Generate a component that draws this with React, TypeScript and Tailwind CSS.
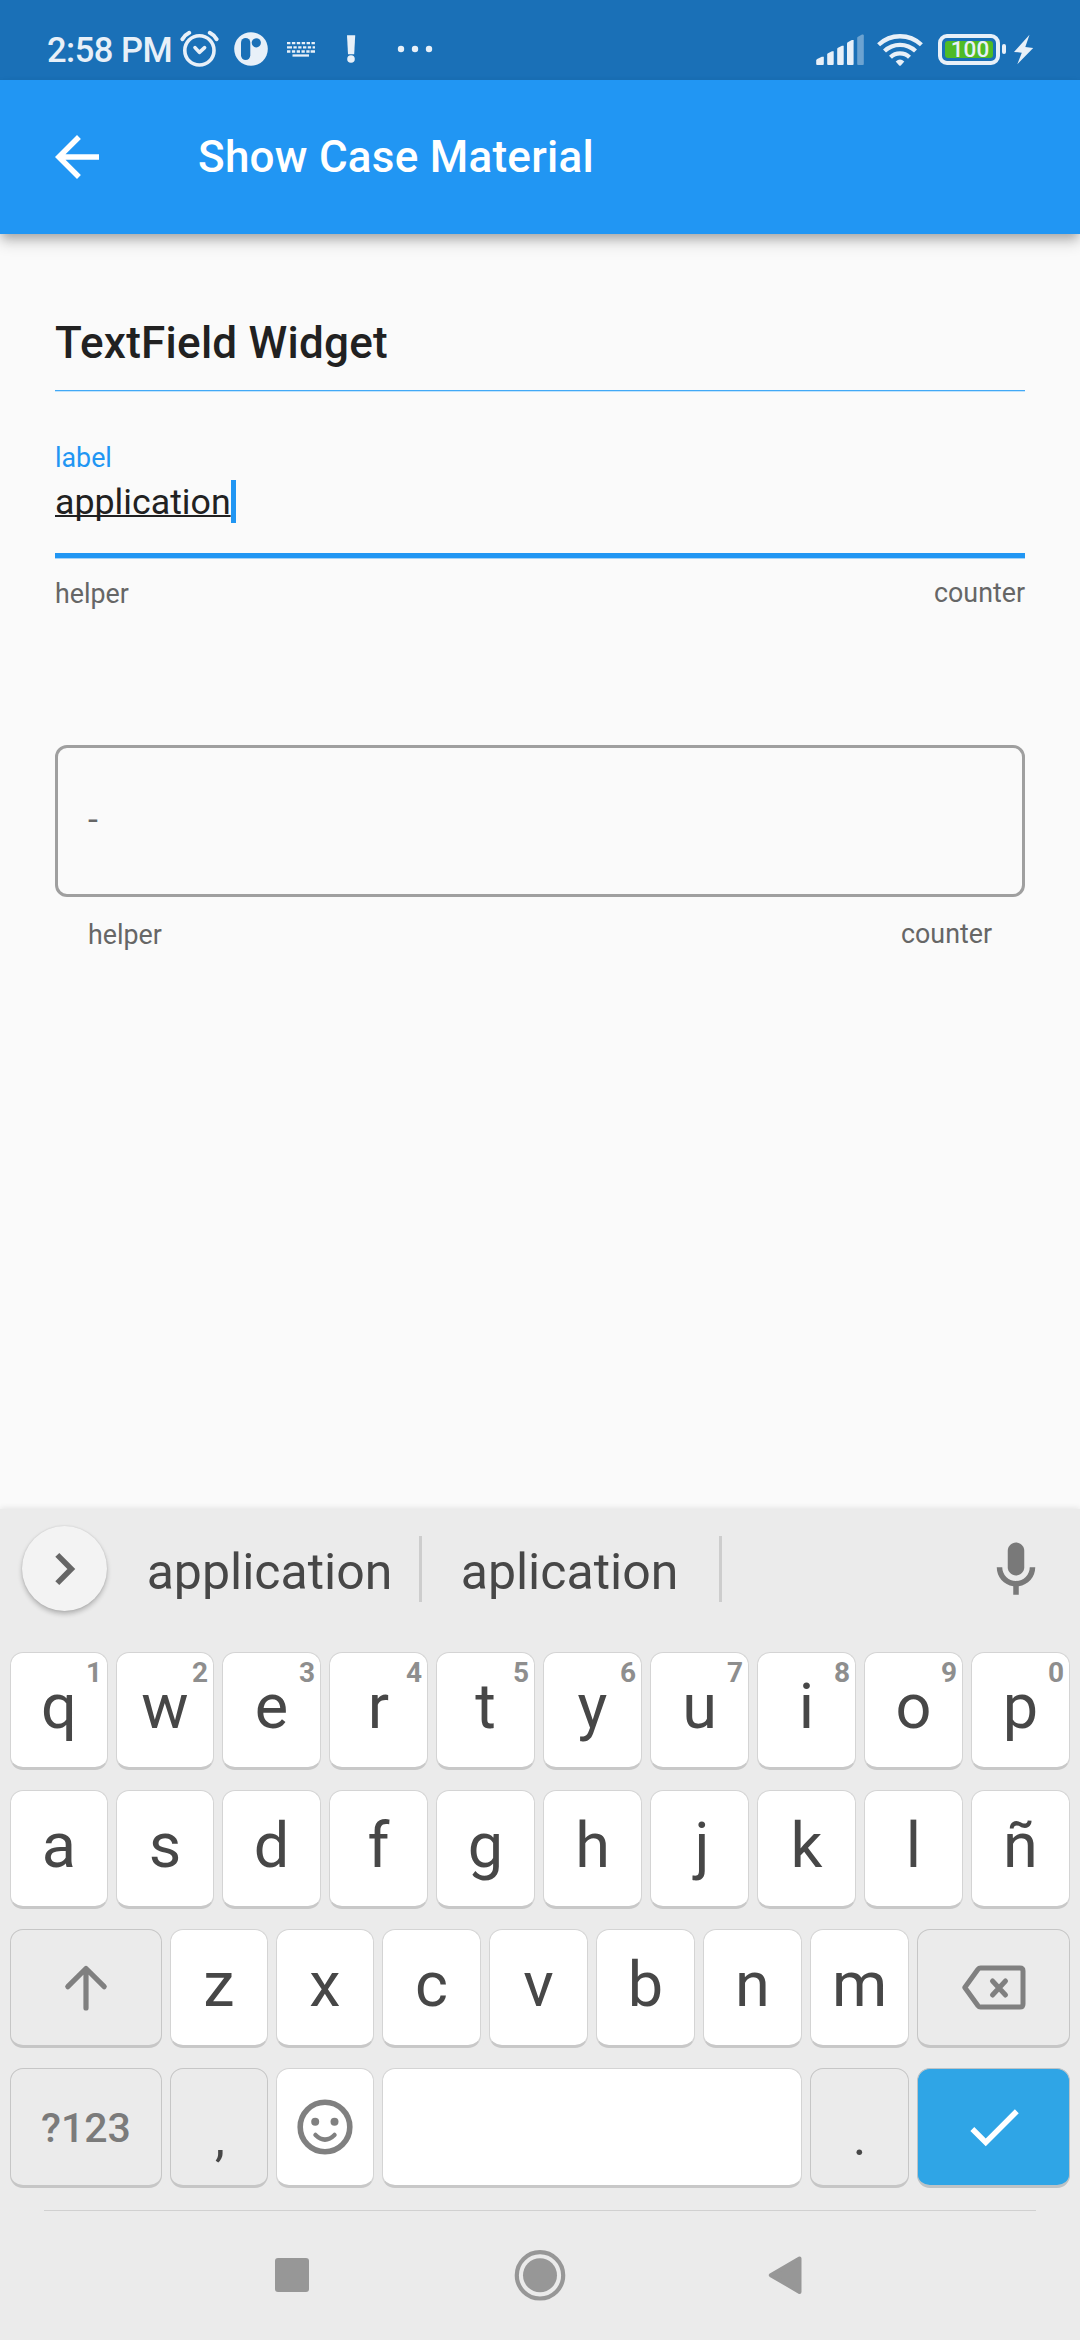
import type { ReactNode } from "react";

const ROW_ONE = [
  ["q", "1"],
  ["w", "2"],
  ["e", "3"],
  ["r", "4"],
  ["t", "5"],
  ["y", "6"],
  ["u", "7"],
  ["i", "8"],
  ["o", "9"],
  ["p", "0"],
];
const ROW_TWO = ["a", "s", "d", "f", "g", "h", "j", "k", "l", "ñ"];
const ROW_THREE = ["z", "x", "c", "v", "b", "n", "m"];

function StatusBar() {
  return (
    <div className="flex h-[80px] items-center bg-[#1a70b7] pt-[20px] text-[#e8f0f8]">
      <span className="ml-[47px] w-[133px] text-[34.5px] leading-[40px] font-medium tracking-[-0.5px] whitespace-nowrap">2:58 PM</span>
      {/* alarm */}
      <svg className="h-[60px] w-[40px]" viewBox="180 20 40 60" fill="none" stroke="currentColor" strokeLinecap="round">
        <circle cx="199.4" cy="50.4" r="14.6" strokeWidth="3.6" />
        <path d="M195 47.6l4.4 4.8 5.2-4.8" strokeWidth="3.6" strokeLinejoin="round" />
        <path d="M182.4 39.2q2.6-4.4 6.8-6.4M216.6 39.2q-2.600-4.400-6.800-6.400" strokeWidth="4" />
      </svg>
      {/* app badge */}
      <svg className="ml-[12px] h-[60px] w-[40px]" viewBox="232 20 40 60">
        <circle cx="251" cy="49" r="16.8" fill="currentColor" />
        <rect x="241" y="38" width="9.300" height="22" rx="4.650" fill="#1a70b7" />
        <circle cx="256.300" cy="42.800" r="4.600" fill="#1a70b7" />
      </svg>
      {/* keyboard */}
      <svg className="ml-[12px] h-[60px] w-[36px]" viewBox="284 20 36 60" stroke="currentColor" strokeWidth="2.300">
        <path d="M287 43.200H315" strokeDasharray="3.400 1.500" />
        <path d="M287 47.300H315" strokeDasharray="5 1.400 3.300 1.500 3.300 1.500 3.300 1.500 3.300 1.500 4" />
        <path d="M287 51.500H315" strokeDasharray="3.400 1.500 3.300 1.500 3.300 1.500 3.300 1.500 3.300 1 5" />
        <path d="M292.500 55.500H309" />
      </svg>
      {/* exclamation mark */}
      <svg className="ml-[20px] h-[60px] w-[20px]" viewBox="340 20 20 60" fill="currentColor">
        <path d="M347 35.200h8.200l-1 19h-6.200z" />
        <circle cx="351" cy="59" r="3.800" />
      </svg>
      {/* overflow dots */}
      <svg className="ml-[36px] h-[60px] w-[40px]" viewBox="396 20 40 60" fill="currentColor">
        <circle cx="401" cy="49" r="3.200" />
        <circle cx="415" cy="49" r="3.200" />
        <circle cx="429" cy="49" r="3.200" />
      </svg>
      {/* signal */}
      <svg className="ml-auto h-[60px] w-[52px]" viewBox="814 20 52 60" fill="currentColor">
        <path d="M816.200 60.500q0-1 1-1.600l4.600-2.200h2v7.300q0 1-1 1h-5.600q-1 0-1-1z" />
        <path d="M827.200 54.500q0-.8.800-1.300l4-1.900h1.700V64q0 1-1 1h-4.500q-1 0-1-1z" />
        <path d="M837.200 49q0-.8.800-1.300l4-2h1.700V64q0 1-1 1h-4.500q-1 0-1-1z" />
        <path d="M847 43.500q0-.8.800-1.300l4-2.200h1.800V64q0 1-1 1H848q-1 0-1-1z" />
        <path d="M857.200 38q0-.8.800-1.300l4-2.200h.8q1 0 1 1V64q0 1-1 1h-4.600q-1 0-1-1z" opacity=".4" />
      </svg>
      {/* wifi */}
      <svg className="ml-[9px] h-[60px] w-[50px]" viewBox="875 20 50 60" fill="none" stroke="currentColor" strokeWidth="4.300">
        <path d="M878.600 44.800a31 31 0 0 1 42.800 0" />
        <path d="M884.500 51a22.500 22.500 0 0 1 31 0" />
        <path d="M890.500 57.200a13.800 13.800 0 0 1 19 0" />
        <path d="M895.700 61.500q4.300-4.200 8.600 0l-3.500 4q-.8.700-1.600 0z" fill="currentColor" stroke="none" />
      </svg>
      {/* battery */}
      <div className="ml-[13px] flex h-[31px] w-[62px] -translate-y-px items-center justify-center rounded-[9px] border-[4px] border-[#e8f0f8]">
        <div className="flex h-[17px] w-[48px] items-center justify-center rounded-[3px] bg-[#4fbb25]">
          <span className="pt-px pl-[2px] text-[22.500px] leading-none font-medium">100</span>
        </div>
      </div>
      <div className="ml-[2px] h-[10px] w-[4px] -translate-y-px rounded-[2px] bg-[#e8f0f8]" />
      <svg className="mr-[46px] ml-[6px] h-[60px] w-[22px]" viewBox="1012 20 22 60" fill="currentColor">
        <path d="M1029.500 34.700l-15.500 17.200 7.800.8-4.500 11.600 15.900-16.300-7.900-1z" />
      </svg>
    </div>
  );
}

function AppBar() {
  return (
    <div className="relative flex h-[154px] items-center bg-[#2196f3] text-white shadow-[0_5px_10px_-2px_rgba(0,0,0,0.26),0_10px_13px_0px_rgba(0,0,0,0.13)]">
      <svg className="ml-[44px] size-[66px]" viewBox="0 0 24 24" fill="currentColor">
        <path d="M20 11H7.830l5.590-5.590L12 4l-8 8 8 8 1.410-1.410L7.830 13H20v-2z" />
      </svg>
      <h1 className="ml-[88px] text-[44px] leading-[52px] font-medium tracking-[0.25px] whitespace-nowrap">Show Case Material</h1>
    </div>
  );
}

function FieldNotes() {
  return (
    <div className="flex items-start justify-between text-[26.800px] leading-[32px] text-[#666666]">
      <span className="pt-px">helper</span>
      <span>counter</span>
    </div>
  );
}

function Page() {
  return (
    <div className="flex h-[1275px] flex-col bg-[#fafafa] px-[55px] pt-[83px]">
      <h2 className="text-[44px] leading-[52px] font-medium tracking-[0.25px] text-[#212121]">TextField Widget</h2>
      <div className="mt-[21px] h-[2px] border-t border-[#42a9f6] bg-[#c3e3fb]" />
      <div className="mt-[50px] text-[26.800px] leading-[32px] text-[#2196f3]">label</div>
      <div className="mt-[6px] flex h-[43px] text-[35.750px] leading-[45px] text-[#212121]">
        <span className="underline decoration-[2px] underline-offset-[1px] [text-decoration-skip-ink:none]">application</span>
        <span className="h-[43px] w-[5.500px] bg-[#2196f3]" />
      </div>
      <div className="mt-[30px] h-[6px] border-b border-[#a5d3f9] bg-[#2196f3]" />
      <div className="mt-[18px]">
        <FieldNotes />
      </div>
      <div className="mt-[135px] flex h-[152px] shrink-0 items-center rounded-[12px] border-[3px] border-[#9f9f9f] px-[30px] pb-[4px] text-[35.750px] leading-[42px] text-[#666666]">
        -
      </div>
      <div className="mt-[21px] px-[33px]">
        <FieldNotes />
      </div>
    </div>
  );
}

const WHITE_KEY = "relative flex items-center justify-center rounded-[13px] border border-b-[3px] border-[#d4d4d4] border-b-[#c8c8c8] bg-white text-[#474747]";
const GREY_KEY = "relative flex items-center justify-center rounded-[13px] border border-b-[3px] border-[#c6c6c6] bg-[#ebebeb] text-[#474747]";

function LetterKey({ letter, hint }: { letter: string; hint?: string }) {
  return (
    <div className={WHITE_KEY}>
      <span className={letter === "j" ? "pb-[6px] pl-[5px] text-[63px] leading-[74px]" : "pb-[6px] text-[63px] leading-[74px]"}>{letter}</span>
      {hint && <span className="absolute top-[3px] right-[5px] text-[28px] leading-[33px] font-bold text-[#8e8e8e]">{hint}</span>}
    </div>
  );
}

function KeyRow({ className, children }: { className: string; children: ReactNode }) {
  return <div className={`grid gap-x-[8px] px-[10px] ${className}`}>{children}</div>;
}

function Suggestions() {
  return (
    <div className="flex h-[143px] items-start pt-[17px]">
      <div className="ml-[22px] flex size-[85px] items-center justify-center rounded-full bg-[#f3f3f3] shadow-[0_3px_5px_rgba(0,0,0,0.24),0_0_2px_rgba(0,0,0,0.12)]">
        <svg className="h-[40px] w-[30px]" viewBox="0 0 30 40" fill="none" stroke="#666666" strokeWidth="5.600">
          <path d="M7.300 5.900L21.300 20L7.300 34.100" />
        </svg>
      </div>
      <div className="mt-[10px] ml-[15px] w-[300px] border-r-[3px] border-[#cdcdcd] text-center text-[50px] leading-[66px] text-[#474747]">
        <span className="inline-block -translate-x-px translate-y-[3px]">application</span>
      </div>
      <div className="mt-[10px] w-[300px] border-r-[3px] border-[#cdcdcd] text-center text-[50px] leading-[66px] text-[#474747]">
        <span className="inline-block -translate-x-px translate-y-[3px]">aplication</span>
      </div>
      <svg className="mt-[10.500px] mr-[31px] ml-auto size-[66px]" viewBox="0 0 24 24" fill="#797979">
        <path d="M12 14c1.660 0 3-1.340 3-3V5c0-1.660-1.340-3-3-3S9 3.340 9 5v6c0 1.660 1.340 3 3 3z" />
        <path d="M17 11c0 2.760-2.240 5-5 5s-5-2.240-5-5H5c0 3.530 2.610 6.430 6 6.920V21h2v-3.080c3.390-.49 6-3.390 6-6.920h-2z" />
      </svg>
    </div>
  );
}

function Keyboard() {
  return (
    <div className="relative flex h-[679px] flex-col bg-[#ebebeb] shadow-[0_-1px_6px_rgba(0,0,0,0.09)]">
      <Suggestions />
      <KeyRow className="h-[118px] grid-cols-[98px_98px_repeat(8,99px)]">
        {ROW_ONE.map(([letter, hint]) => (
          <LetterKey key={letter} letter={letter} hint={hint} />
        ))}
      </KeyRow>
      <KeyRow className="mt-[20px] h-[119px] grid-cols-[98px_98px_repeat(8,99px)]">
        {ROW_TWO.map((letter) => (
          <LetterKey key={letter} letter={letter} />
        ))}
      </KeyRow>
      <KeyRow className="mt-[20px] h-[119px] grid-cols-[152px_98px_98px_repeat(5,99px)_153px]">
        <div className={GREY_KEY}>
          <svg className="mr-px h-[50px] w-[50px]" viewBox="0 0 50 50" fill="none" stroke="#808080" strokeWidth="5.200" strokeLinecap="round" strokeLinejoin="round">
            <path d="M25 45V5.500M6.800 23.700L25 5.500L43.200 23.700" />
          </svg>
        </div>
        {ROW_THREE.map((letter) => (
          <LetterKey key={letter} letter={letter} />
        ))}
        <div className={GREY_KEY}>
          <svg className="h-[48px] w-[68px]" viewBox="0 0 68 48" fill="none" stroke="#808080" strokeWidth="5" strokeLinecap="round" strokeLinejoin="round">
            <path d="M20.500 4H60Q63 4 63 7V40Q63 43 60 43H20.500Q19 43 18 41.700L4.800 23.500L18 5.300Q19 4 20.500 4Z" />
            <path d="M32.500 17L45.500 31M45.500 17L32.500 31" />
          </svg>
        </div>
      </KeyRow>
      <KeyRow className="mt-[20px] h-[120px] grid-cols-[152px_98px_98px_420px_99px_153px]">
        <div className={GREY_KEY}>
          <span className="pt-[2px] text-[41px] leading-[48px] font-medium text-[#7b7b7b]">?123</span>
        </div>
        <div className={GREY_KEY}>
          <span className="pt-[21px] pl-[2px] text-[50px] leading-[60px]">,</span>
        </div>
        <div className={WHITE_KEY}>
          <svg className="size-[56px]" viewBox="0 0 56 56" fill="none" stroke="#808080" strokeLinecap="round">
            <circle cx="28" cy="28" r="24.800" strokeWidth="5.600" />
            <circle cx="18.200" cy="22.800" r="4" fill="#808080" stroke="none" />
            <circle cx="37.500" cy="22.800" r="4" fill="#808080" stroke="none" />
            <path d="M18.500 36q9.500 9.200 19 0" strokeWidth="4.500" />
          </svg>
        </div>
        <div className={WHITE_KEY} />
        <div className={GREY_KEY}>
          <span className="pt-[21px] text-[50px] leading-[60px]">.</span>
        </div>
        <div className="flex items-center justify-center rounded-[13px] border border-b-[3px] border-[#bdc3c6] bg-[#2fa5e6]">
          <svg className="size-[66px]" viewBox="0 0 24 24" fill="white">
            <path d="M9 16.170L4.830 12l-1.420 1.410L9 19 21 7l-1.410-1.410z" />
          </svg>
        </div>
      </KeyRow>
    </div>
  );
}

function NavigationBar() {
  return (
    <div className="relative flex h-[152px] flex-col bg-[#ebebeb] px-[44px] pt-[22px]">
      <div className="h-px bg-[#d0d0d0]" />
      <div className="flex h-[128px] items-center justify-between pr-[234px] pl-[231px]">
        <div className="size-[34px] rounded-[3px] bg-[#979797]" />
        <svg className="size-[54px]" viewBox="0 0 54 54">
          <circle cx="28" cy="27.300" r="23.200" fill="none" stroke="#979797" strokeWidth="4.200" />
          <circle cx="28" cy="27.300" r="17" fill="#979797" />
        </svg>
        <svg className="h-[40px] w-[34px]" viewBox="0 0 34 40" fill="#979797" stroke="#979797" strokeWidth="4" strokeLinejoin="round">
          <path d="M31.500 3.500V36.900L2.800 20.200Z" />
        </svg>
      </div>
    </div>
  );
}

export default function App() {
  return (
    <div className="flex h-[2340px] w-[1080px] flex-col overflow-hidden font-[Roboto,sans-serif]">
      <div className="relative z-10">
        <StatusBar />
        <AppBar />
      </div>
      <Page />
      <Keyboard />
      <NavigationBar />
    </div>
  );
}
